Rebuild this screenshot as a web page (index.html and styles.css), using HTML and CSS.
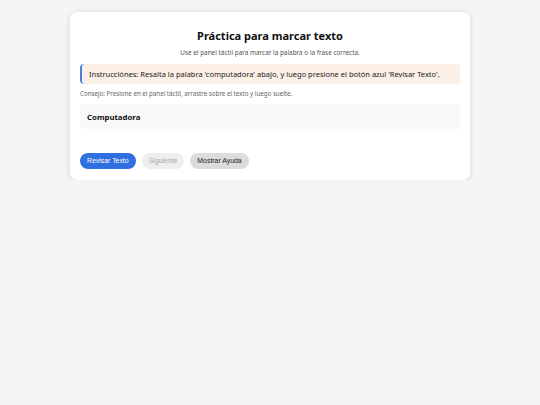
FILE: index.html
```html
<!DOCTYPE html>
<html lang="es">
<head>
<meta charset="utf-8">
<title>Práctica para marcar texto</title>
<link rel="stylesheet" href="styles.css">
</head>
<body>
<main class="card">
  <h1 class="title">Práctica para marcar texto</h1>
  <p class="subtitle">Use el panel táctil para marcar la palabra o la frase correcta.</p>
  <div class="instructions">Instrucciónes: Resalta la palabra 'computadora' abajo, y luego presione el botón azul 'Revisar Texto'.</div>
  <p class="hint">Consejo: Presione en el panel táctil, arrastre sobre el texto y luego suelte.</p>
  <div class="word-box"><span class="word">Computadora</span></div>
  <div class="actions">
    <button class="btn btn-primary">Revisar Texto</button>
    <button class="btn btn-disabled" disabled>Siguiente</button>
    <button class="btn btn-secondary">Mostrar Ayuda</button>
  </div>
</main>
</body>
</html>
```

FILE: styles.css
```css
html, body {
  margin: 0;
  padding: 0;
}
body {
  background: #f5f5f5;
  font-family: "Noto Sans", "Open Sans", sans-serif;
  color: #111;
  padding-top: 12px;
}
.card {
  box-sizing: border-box;
  width: 400px;
  margin: 0 auto;
  background: #fff;
  border-radius: 7px;
  box-shadow: 0 1px 6px rgba(0,0,0,0.13);
  padding: 16px 10px 11px;
}
.title {
  margin: 0;
  text-align: center;
  font-size: 11px;
  font-weight: 700;
  line-height: 16px;
}
.subtitle {
  margin: 4px 0 0;
  text-align: center;
  font-size: 6.4px;
  line-height: 10px;
  color: #555;
}
.instructions {
  margin-top: 6px;
  height: 20px;
  display: flex;
  align-items: center;
  padding-left: 7px;
  border-left: 2px solid #4a7fe0;
  border-radius: 4px;
  background: #fbefe6;
  font-size: 7.5px;
  color: #222;
  white-space: nowrap;
}
.hint {
  margin: 5px 0 0;
  font-size: 6.2px;
  line-height: 10px;
  color: #666;
}
.word-box {
  margin-top: 5px;
  height: 25px;
  display: flex;
  align-items: center;
  padding-left: 7px;
  background: #f9f9f9;
  border-radius: 4px;
}
.word {
  font-size: 7.8px;
  font-weight: 700;
  color: #111;
}
.actions {
  margin-top: 24px;
  display: flex;
  gap: 6px;
}
.btn {
  height: 16px;
  border: none;
  border-radius: 8px;
  padding: 0 7px;
  font-family: "Liberation Sans", Arial, sans-serif;
  font-size: 6.9px;
  line-height: 16px;
}
.btn-primary {
  background: #2f6fe0;
  color: #fff;
}
.btn-disabled {
  background: #eeeeee;
  color: #aaaaaa;
}
.btn-secondary {
  background: #dcdcdc;
  color: #222;
}
```
